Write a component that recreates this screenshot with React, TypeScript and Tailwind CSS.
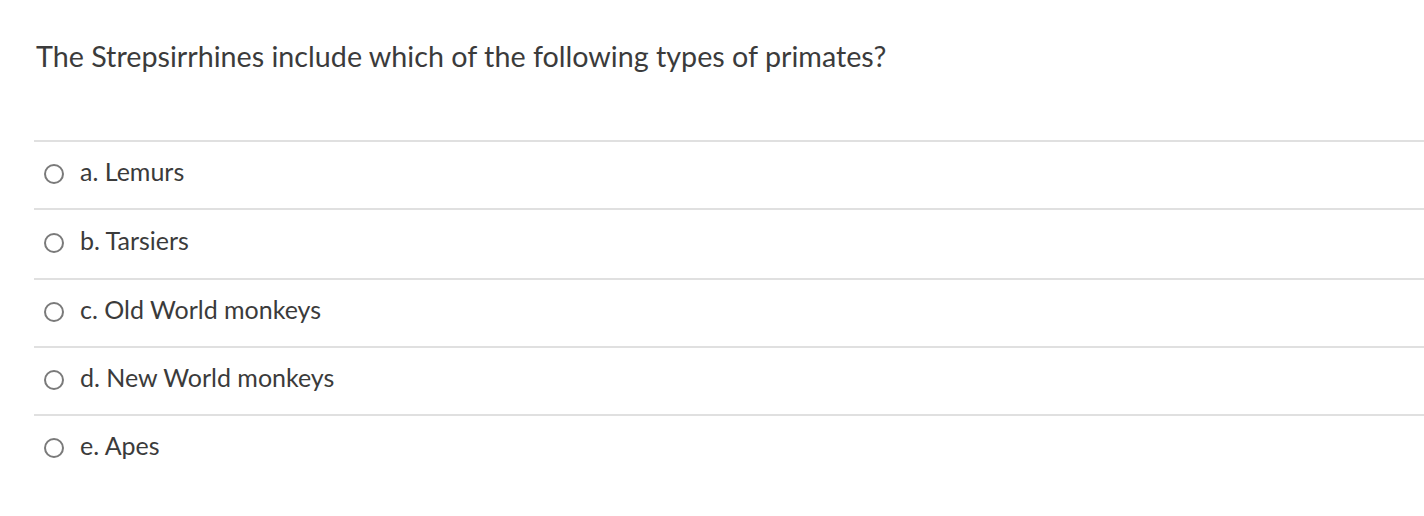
import React from "react";

const options = ["a. Lemurs", "b. Tarsiers", "c. Old World monkeys", "d. New World monkeys", "e. Apes"];
const heights = ["h-[68px]", "h-[70px]", "h-[68px]", "h-[68px]", "h-[68px]"];

export default function App() {
  return (
    <div className="w-[1424px] h-[516px] bg-white text-[#3b3b3b] overflow-hidden" style={{ fontFamily: "Lato, 'Noto Sans', sans-serif" }}>
      <div className="pt-[38px] pl-[36px] text-[28.7px] leading-[36px]">
        The Strepsirrhines include which of the following types of primates?
      </div>
      <div className="ml-[34px] mt-[66px]">
        {options.map((o, i) => (
          <div key={i} className={`${heights[i]} flex items-center pb-[8px] border-t-2 border-[#e0e0e0]`}>
            <span className="ml-[10px] mt-[6px] w-[20px] h-[20px] rounded-full border-2 border-[#7a7a7a] shrink-0"></span>
            <span className="ml-[16px] text-[25px] leading-[30px]">{o}</span>
          </div>
        ))}
      </div>
    </div>
  );
}
